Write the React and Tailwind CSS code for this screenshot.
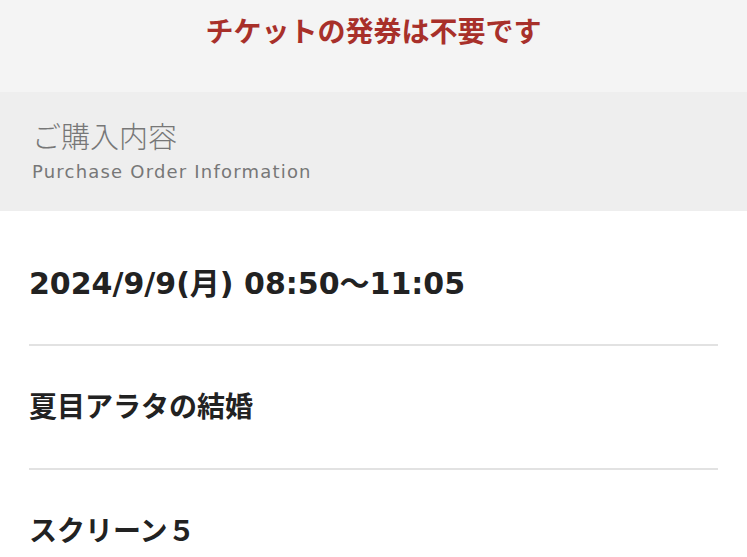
import React from 'react';

const jp = { fontFamily: '"DejaVu Sans", "Noto Sans CJK JP", sans-serif' };

const rows = [
  { text: '2024/9/9(月) 08:50〜11:05', size: 'text-[30px]' },
  { text: '夏目アラタの結婚', size: 'text-[28px]' },
  { text: 'スクリーン５', size: 'text-[28px]' },
];

export default function App() {
  return (
    <div className="min-h-screen bg-white" style={jp}>
      {/* notice band */}
      <div className="bg-[#f4f4f4] pt-[13px] pb-[39px] text-center">
        <p className="text-[28px] leading-[40px] font-bold text-[#a8302a]">チケットの発券は不要です</p>
      </div>

      {/* section header */}
      <div className="bg-[#eeeeee] px-[32px] pt-[28px] pb-[27px]">
        <h2 className="text-[29px] leading-[36px] font-light text-[#777777]">ご購入内容</h2>
        <p className="mt-[4px] text-[18px] leading-[24px] tracking-[1.2px] text-[#777777]">Purchase Order Information</p>
      </div>

      {/* order rows */}
      <div className="px-[29px] pt-[11px]">
        {rows.map((r, i) => (
          <div key={i} className={`pt-[42px] pb-[40px] ${i < rows.length - 1 ? 'border-b-2 border-[#e2e2e2]' : ''}`}>
            <p className={`${r.size} leading-[40px] font-bold text-[#222222]`}>{r.text}</p>
          </div>
        ))}
      </div>
    </div>
  );
}
